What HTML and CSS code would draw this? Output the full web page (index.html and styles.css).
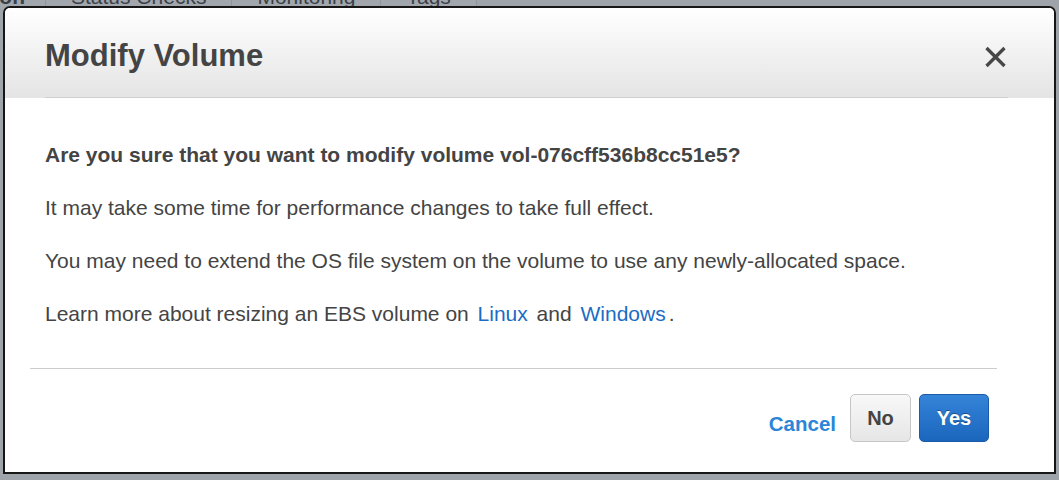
FILE: index.html
```html
<!DOCTYPE html>
<html>
<head>
<meta charset="utf-8">
<link rel="stylesheet" href="styles.css">
</head>
<body>
<div class="tabs">
  <div class="tab tab-first">Description</div>
  <div class="tab">Status Checks</div>
  <div class="tab">Monitoring</div>
  <div class="tab">Tags</div>
</div>
<div class="modal">
  <div class="modal-header">
    <div class="header-inner">
      <h1 class="title">Modify Volume</h1>
      <svg class="close" width="25" height="22" viewBox="0 0 25 22"><path d="M3.5 2 L21.5 20 M21.5 2 L3.5 20" stroke="#474747" stroke-width="3.3" fill="none"/></svg>
    </div>
  </div>
  <div class="modal-body">
    <p class="question">Are you sure that you want to modify volume vol-076cff536b8cc51e5?</p>
    <p>It may take some time for performance changes to take full effect.</p>
    <p>You may need to extend the OS file system on the volume to use any newly-allocated space.</p>
    <p>Learn more about resizing an EBS volume on <a class="link">Linux</a> and <a class="link">Windows</a>.</p>
  </div>
  <div class="modal-footer">
    <a class="cancel">Cancel</a>
    <button class="btn btn-no">No</button>
    <button class="btn btn-yes">Yes</button>
  </div>
</div>
</body>
</html>
```
FILE: styles.css
```css
html, body {
  margin: 0;
  padding: 0;
  width: 1059px;
  height: 480px;
  overflow: hidden;
  background: #9ea4aa;
  font-family: "Liberation Sans", Arial, sans-serif;
}
.tabs {
  display: flex;
  margin-top: -15px;
  height: 24px;
  margin-left: -134px;
}
.tab {
  padding: 0 25px;
  font-size: 21px;
  line-height: 24px;
  color: #3b4046;
  border-right: 1px solid #8f959b;
  background: #a1a7ad;
}
.tab-first {
  font-weight: bold;
  padding: 0 20px 0 24px;
  width: 135px;
  text-align: right;
}
.modal {
  position: absolute;
  left: 3px;
  top: 6px;
  width: 1049px;
  height: 464px;
  border: 2px solid #161616;
  border-radius: 7px 7px 0 0;
  background: #fff;
  overflow: hidden;
  display: flex;
  flex-direction: column;
  color: #444;
}
.modal-header {
  height: 90px;
  background: linear-gradient(#ffffff, #e4e4e4);
  padding: 0 46px 0 40px;
  flex-shrink: 0;
}
.header-inner {
  height: 89px;
  border-bottom: 1px solid #cfcfcf;
  display: flex;
  align-items: center;
  justify-content: space-between;
}
.title {
  margin: 7px 0 0 0;
  font-size: 31px;
  font-weight: bold;
  color: #444;
}
.close {
  margin-right: 0;
  margin-top: 8px;
}
.modal-body {
  padding: 45px 40px 0 15px;
  display: flex;
  flex-direction: column;
  gap: 29px;
  height: 225px;
  border-bottom: 1px solid #cccccc;
  margin: 0 57px 0 25px;
  box-sizing: content-box;
}
.modal-body p {
  margin: 0;
  font-size: 21px;
  line-height: 24px;
  color: #444;
}
.modal-body .question {
  font-weight: bold;
}
.link {
  color: #1a6cc4;
  padding: 0 3px;
}
.modal-footer {
  display: flex;
  justify-content: flex-end;
  align-items: center;
  padding: 25px 65px 0 0;
  gap: 8px;
}
.cancel {
  color: #2b86d8;
  font-weight: bold;
  font-size: 20.5px;
  margin-right: 6px;
  margin-top: 12px;
}
.btn {
  height: 48px;
  border-radius: 5px;
  font-family: "Liberation Sans", Arial, sans-serif;
  font-weight: bold;
  font-size: 20px;
  padding: 0;
}
.btn-no {
  width: 61px;
  background: linear-gradient(#f8f8f8, #e6e6e6);
  border: 1px solid #c6c6c6;
  color: #444;
}
.btn-yes {
  width: 70px;
  background: linear-gradient(#3584d8, #1a66bd);
  border: 1px solid #1a5aa6;
  color: #fff;
  text-shadow: 0 -1px 0 rgba(0,0,0,0.35);
}
```
